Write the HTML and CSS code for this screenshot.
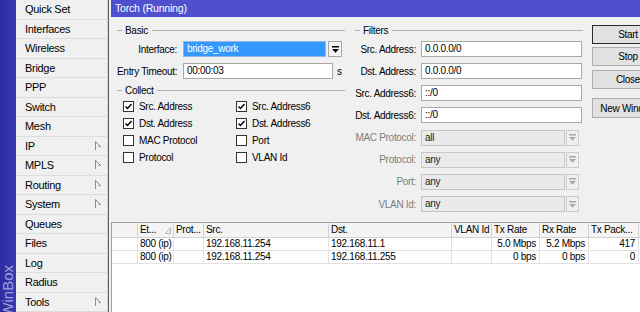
FILE: index.html
```html
<!DOCTYPE html>
<html>
<head>
<meta charset="utf-8">
<link rel="stylesheet" href="styles.css">
</head>
<body>
<div class="app">
  <div class="strip"><span class="brand">WinBox</span></div>
  <ul class="menu">
    <li>Quick Set</li>
    <li>Interfaces</li>
    <li>Wireless</li>
    <li>Bridge</li>
    <li>PPP</li>
    <li>Switch</li>
    <li>Mesh</li>
    <li>IP<svg class="arr" width="7" height="10" viewBox="0 0 7 10"><polyline points="0.5,9 0.5,0.5 5.5,5.5 3.5,5.5" fill="none" stroke="#8c8c8c" stroke-width="1"/></svg></li>
    <li>MPLS<svg class="arr" width="7" height="10" viewBox="0 0 7 10"><polyline points="0.5,9 0.5,0.5 5.5,5.5 3.5,5.5" fill="none" stroke="#8c8c8c" stroke-width="1"/></svg></li>
    <li>Routing<svg class="arr" width="7" height="10" viewBox="0 0 7 10"><polyline points="0.5,9 0.5,0.5 5.5,5.5 3.5,5.5" fill="none" stroke="#8c8c8c" stroke-width="1"/></svg></li>
    <li>System<svg class="arr" width="7" height="10" viewBox="0 0 7 10"><polyline points="0.5,9 0.5,0.5 5.5,5.5 3.5,5.5" fill="none" stroke="#8c8c8c" stroke-width="1"/></svg></li>
    <li>Queues</li>
    <li>Files</li>
    <li>Log</li>
    <li>Radius</li>
    <li>Tools<svg class="arr" width="7" height="10" viewBox="0 0 7 10"><polyline points="0.5,9 0.5,0.5 5.5,5.5 3.5,5.5" fill="none" stroke="#8c8c8c" stroke-width="1"/></svg></li>
  </ul>
  <div class="window">
    <div class="titlebar">Torch (Running)</div>
    <div class="top">
      <div class="col-left">
        <div class="legend"><span class="dash"></span><span class="ltext">Basic</span><span class="rule"></span></div>
        <div class="row">
          <span class="lbl">Interface:</span>
          <span class="field sel">bridge_work</span>
          <span class="ddbtn"><svg width="7" height="7" viewBox="0 0 7 7"><rect x="0" y="0" width="7" height="1.5" fill="#000"/><path d="M0 3 H7 L3.5 6.8 Z" fill="#000"/></svg></span>
        </div>
        <div class="row">
          <span class="lbl">Entry Timeout:</span>
          <span class="field timeout">00:00:03</span>
          <span class="unit">s</span>
        </div>
        <div class="legend"><span class="dash"></span><span class="ltext">Collect</span><span class="rule"></span></div>
        <div class="checks">
          <div class="chk"><span class="box"><svg width="9" height="9" viewBox="0 0 9 9"><path d="M1.5 4.5 L3.5 6.5 L7.5 2" fill="none" stroke="#000" stroke-width="1.5"/></svg></span>Src. Address</div>
          <div class="chk"><span class="box"><svg width="9" height="9" viewBox="0 0 9 9"><path d="M1.5 4.5 L3.5 6.5 L7.5 2" fill="none" stroke="#000" stroke-width="1.5"/></svg></span>Src. Address6</div>
          <div class="chk"><span class="box"><svg width="9" height="9" viewBox="0 0 9 9"><path d="M1.5 4.5 L3.5 6.5 L7.5 2" fill="none" stroke="#000" stroke-width="1.5"/></svg></span>Dst. Address</div>
          <div class="chk"><span class="box"><svg width="9" height="9" viewBox="0 0 9 9"><path d="M1.5 4.5 L3.5 6.5 L7.5 2" fill="none" stroke="#000" stroke-width="1.5"/></svg></span>Dst. Address6</div>
          <div class="chk"><span class="box"></span>MAC Protocol</div>
          <div class="chk"><span class="box"></span>Port</div>
          <div class="chk"><span class="box"></span>Protocol</div>
          <div class="chk"><span class="box"></span>VLAN Id</div>
        </div>
      </div>
      <div class="col-filters">
        <div class="legend"><span class="dash"></span><span class="ltext">Filters</span><span class="rule"></span></div>
        <div class="row"><span class="lbl">Src. Address:</span><span class="field">0.0.0.0/0</span></div>
        <div class="row"><span class="lbl">Dst. Address:</span><span class="field">0.0.0.0/0</span></div>
        <div class="row"><span class="lbl">Src. Address6:</span><span class="field">::/0</span></div>
        <div class="row"><span class="lbl">Dst. Address6:</span><span class="field">::/0</span></div>
        <div class="row off"><span class="lbl">MAC Protocol:</span><span class="field">all</span><span class="ddbtn"><svg width="7" height="7" viewBox="0 0 7 7"><rect x="0" y="0" width="7" height="1.5" fill="#a8a8a8"/><path d="M0 3 H7 L3.5 6.8 Z" fill="#a8a8a8"/></svg></span></div>
        <div class="row off"><span class="lbl">Protocol:</span><span class="field">any</span><span class="ddbtn"><svg width="7" height="7" viewBox="0 0 7 7"><rect x="0" y="0" width="7" height="1.5" fill="#a8a8a8"/><path d="M0 3 H7 L3.5 6.8 Z" fill="#a8a8a8"/></svg></span></div>
        <div class="row off"><span class="lbl">Port:</span><span class="field">any</span><span class="ddbtn"><svg width="7" height="7" viewBox="0 0 7 7"><rect x="0" y="0" width="7" height="1.5" fill="#a8a8a8"/><path d="M0 3 H7 L3.5 6.8 Z" fill="#a8a8a8"/></svg></span></div>
        <div class="row off"><span class="lbl">VLAN Id:</span><span class="field">any</span><span class="ddbtn"><svg width="7" height="7" viewBox="0 0 7 7"><rect x="0" y="0" width="7" height="1.5" fill="#a8a8a8"/><path d="M0 3 H7 L3.5 6.8 Z" fill="#a8a8a8"/></svg></span></div>
      </div>
      <div class="col-buttons">
        <div class="btn default">Start</div>
        <div class="btn stop">Stop</div>
        <div class="btn close">Close</div>
        <div class="btn neww">New Window</div>
      </div>
    </div>
    <div class="tablewrap">
      <div class="trow thead">
        <span></span>
        <span class="sort">Et...<svg width="6" height="7" viewBox="0 0 6 7"><path d="M0.5 6.5 L5.5 0.5 L5.5 6.5 Z" fill="none" stroke="#b5b5b5" stroke-width="1"/></svg></span>
        <span>Prot...</span>
        <span>Src.</span>
        <span>Dst.</span>
        <span>VLAN Id</span>
        <span>Tx Rate</span>
        <span>Rx Rate</span>
        <span>Tx Pack...</span>
        <span></span>
      </div>
      <div class="trow">
        <span></span><span>800 (ip)</span><span></span><span>192.168.11.254</span><span>192.168.11.1</span><span></span><span class="num">5.0 Mbps</span><span class="num">5.2 Mbps</span><span class="num">417</span><span></span>
      </div>
      <div class="trow">
        <span></span><span>800 (ip)</span><span></span><span>192.168.11.254</span><span>192.168.11.255</span><span></span><span class="num">0 bps</span><span class="num">0 bps</span><span class="num">0</span><span></span>
      </div>
    </div>
  </div>
</div>
</body>
</html>
```
FILE: styles.css
```css
* { box-sizing: border-box; }
html, body { margin: 0; padding: 0; }
body {
  width: 640px;
  height: 312px;
  overflow: hidden;
  font-family: "Liberation Sans", Arial, sans-serif;
  font-size: 10px;
  letter-spacing: -0.3px;
  color: #000;
  background: #f0f0f0;
}
.app { display: flex; height: 312px; }

.strip {
  width: 16px;
  flex: none;
  background: linear-gradient(to right, #2c2c9e, #3a3ab6);
  display: flex;
  flex-direction: column;
  justify-content: flex-end;
  align-items: center;
  overflow: hidden;
}
.brand {
  writing-mode: vertical-rl;
  transform: rotate(180deg);
  font-size: 15px;
  letter-spacing: 0;
  line-height: 16px;
  color: rgba(255, 255, 255, 0.55);
  margin-bottom: -5px;
  white-space: nowrap;
}

.menu {
  list-style: none;
  margin: 0;
  padding: 0;
  width: 92px;
  flex: none;
  border-right: 1px solid #d2d2d2;
  background: #f0f0f0;
  font-size: 11px;
  letter-spacing: -0.3px;
}
.menu li {
  height: 19.5px;
  display: flex;
  align-items: center;
  justify-content: space-between;
  padding: 0 5px 0 9px;
  border-bottom: 1px solid #dcdcdc;
}
.arr { flex: none; }

.window {
  flex: 1;
  min-width: 0;
  border-left: 1px solid #5e5e5e;
  padding-left: 2px;
  display: flex;
  flex-direction: column;
  background: #f0f0f0;
}
.titlebar {
  height: 17px;
  flex: none;
  background: #4e50ce;
  color: #fff;
  font-size: 10.5px;
  line-height: 17px;
  padding-left: 4px;
  letter-spacing: -0.2px;
}
.top {
  height: 205px;
  flex: none;
  display: flex;
  padding-top: 5px;
}
.col-left { width: 228px; margin-left: 6px; flex: none; }
.col-filters { width: 228px; margin-left: 10px; flex: none; }
.col-buttons { width: 72px; margin-left: 9px; flex: none; padding-top: 3px; }

.legend { height: 16px; display: flex; align-items: center; }
.legend .dash { width: 5px; border-top: 1px solid #b0b0b0; }
.legend .ltext { padding: 0 4px 0 3px; }
.legend .rule { flex: 1; border-top: 1px solid #b0b0b0; }

.row { height: 22px; display: flex; align-items: center; }
.col-filters .row { height: 22.15px; }
.lbl { flex: none; text-align: right; white-space: nowrap; }
.col-left .lbl { width: 60px; margin-right: 6px; }
.col-filters .lbl { width: 61px; margin-right: 5px; }
.field {
  height: 16px;
  border: 1px solid #a8a8a8;
  background: #fff;
  padding: 0 3px;
  line-height: 14px;
  white-space: nowrap;
  overflow: hidden;
  flex: none;
}
.col-filters .field { width: 161px; }
.sel { width: 143px; background: #3399ff; color: #fff; border-color: #8fb8e4; }
.timeout { width: 150px; }
.unit { margin-left: 4px; }
.ddbtn {
  width: 14px;
  height: 16px;
  margin-left: 2px;
  border: 1px solid #a8a8a8;
  background: #f4f4f4;
  display: flex;
  align-items: center;
  justify-content: center;
  flex: none;
}
.row.off .lbl { color: #7d7d7d; }
.col-filters .row.off .field { width: 144px; background: #eaeaea; border-color: #c6c6c6; color: #222; }
.row.off .ddbtn { width: 13px; margin-left: 1px; border-color: #cccccc; background: #efefef; }

.checks {
  display: grid;
  grid-template-columns: 113px 1fr;
  grid-auto-rows: 17px;
  padding-left: 6px;
}
.chk { display: flex; align-items: center; white-space: nowrap; }
.box {
  width: 11px;
  height: 11px;
  border: 1px solid #333;
  background: #fff;
  margin-right: 5px;
  display: flex;
  align-items: center;
  justify-content: center;
  flex: none;
}

.btn {
  height: 19px;
  width: 72px;
  border: 1px solid #adadad;
  background: #e1e1e1;
  display: flex;
  align-items: center;
  justify-content: center;
  white-space: nowrap;
}
.btn.default { border-color: #2b2b2b; }
.btn.stop { margin-top: 3px; }
.btn.close { margin-top: 4px; }
.btn.neww { margin-top: 9px; height: 20px; }

.tablewrap {
  flex: 1;
  min-height: 0;
  overflow: hidden;
  background: #fff;
  border-top: 1px solid #a0a0a0;
  border-left: 1px solid #a0a0a0;
}
.trow {
  display: grid;
  grid-template-columns: 26px 36px 30px 125px 123px 40px 48px 49px 50px 40px;
  width: max-content;
  height: 13px;
}
.trow > span {
  border-right: 1px solid #e2e2e2;
  border-bottom: 1px solid #e2e2e2;
  padding: 0 2px;
  line-height: 12px;
  white-space: nowrap;
  overflow: hidden;
}
.trow.thead { height: 15px; background: #f4f4f4; }
.trow.thead > span { border-color: #d2d2d2; line-height: 14px; }
.trow > span.num { text-align: right; padding-right: 3px; }
.sort { display: flex; align-items: center; justify-content: space-between; padding-right: 4px; }
```
